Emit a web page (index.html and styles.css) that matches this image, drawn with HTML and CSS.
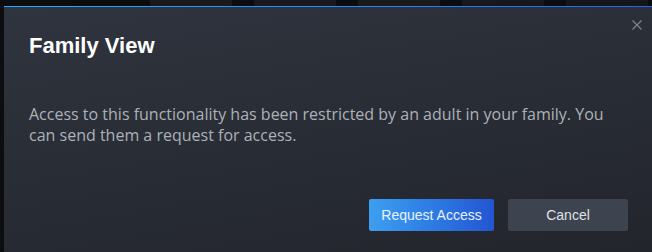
FILE: index.html
```html
<!DOCTYPE html>
<html>
<head>
<meta charset="utf-8">
<link rel="stylesheet" href="styles.css">
</head>
<body>
<div class="backdrop">
  <div class="strip">
    <span class="thumb t1"></span>
    <span class="thumb t2"></span>
    <span class="thumb t3"></span>
    <span class="thumb t4"></span>
    <span class="thumb t5"></span>
  </div>
  <div class="dialog">
    <button class="close" aria-label="Close">
      <svg width="10" height="10" viewBox="0 0 10 10"><path d="M0.5 0.5 L9.5 9.5 M9.5 0.5 L0.5 9.5" stroke="#7d848c" stroke-width="1.3" fill="none"/></svg>
    </button>
    <h1 class="title">Family View</h1>
    <p class="message">Access to this functionality has been restricted by an adult in your family. You can send them a request for access.</p>
    <div class="actions">
      <button class="btn primary">Request Access</button>
      <button class="btn secondary">Cancel</button>
    </div>
  </div>
</div>
</body>
</html>
```
FILE: styles.css
```css
html, body {
  margin: 0;
  padding: 0;
  width: 652px;
  height: 252px;
  overflow: hidden;
  background: #0c0d10;
}
.backdrop {
  display: flex;
  flex-direction: column;
  height: 252px;
}
.strip {
  height: 6px;
  display: flex;
  gap: 22px;
  padding-left: 150px;
  background: #0b0c0f;
}
.thumb {
  width: 82px;
  height: 6px;
  background: #15171b;
}
.t1 { background: #1a1a1c; }
.t2 { background: #18191d; }
.t3 { background: #1b1a1a; }
.t4 { background: #17181c; }
.t5 { background: #141619; }
.dialog {
  position: relative;
  flex: 1;
  margin-left: 4px;
  border-top: 1px solid #1a9fff;
  border-image: linear-gradient(to right, #19b2ff, #1f8cff 50%, #2561f0) 1;
  border-left: 0;
  border-right: 0;
  border-bottom: 0;
  background: linear-gradient(170deg, #30343e 0%, #2a2e37 40%, #22252c 100%);
  padding: 0 24px 0 25px;
  display: flex;
  flex-direction: column;
  font-family: "Liberation Sans", Arial, sans-serif;
}
.close {
  position: absolute;
  top: 13px;
  right: 10px;
  width: 10px;
  height: 10px;
  padding: 0;
  border: 0;
  background: none;
  display: flex;
}
.title {
  margin: 25px 0 0 0;
  font-size: 22px;
  line-height: 28px;
  font-weight: 700;
  color: #ffffff;
}
.message {
  margin: 44px 0 0 0;
  font-family: "Open Sans", "Noto Sans", sans-serif;
  font-size: 16px;
  line-height: 21px;
  color: #acb2b8;
  max-width: 600px;
}
.actions {
  margin-top: auto;
  margin-bottom: 21px;
  display: flex;
  justify-content: flex-end;
  gap: 14px;
}
.btn {
  height: 32px;
  border: 0;
  border-radius: 2px;
  font-family: "Liberation Sans", Arial, sans-serif;
  font-size: 14px;
  padding: 0;
}
.primary {
  width: 125px;
  color: #e8f2ff;
  background: linear-gradient(to right, #3d9ff0 0%, #2f7fe6 45%, #2356d2 100%);
}
.secondary {
  width: 120px;
  color: #dfe3e6;
  background: #3d4450;
}
```
